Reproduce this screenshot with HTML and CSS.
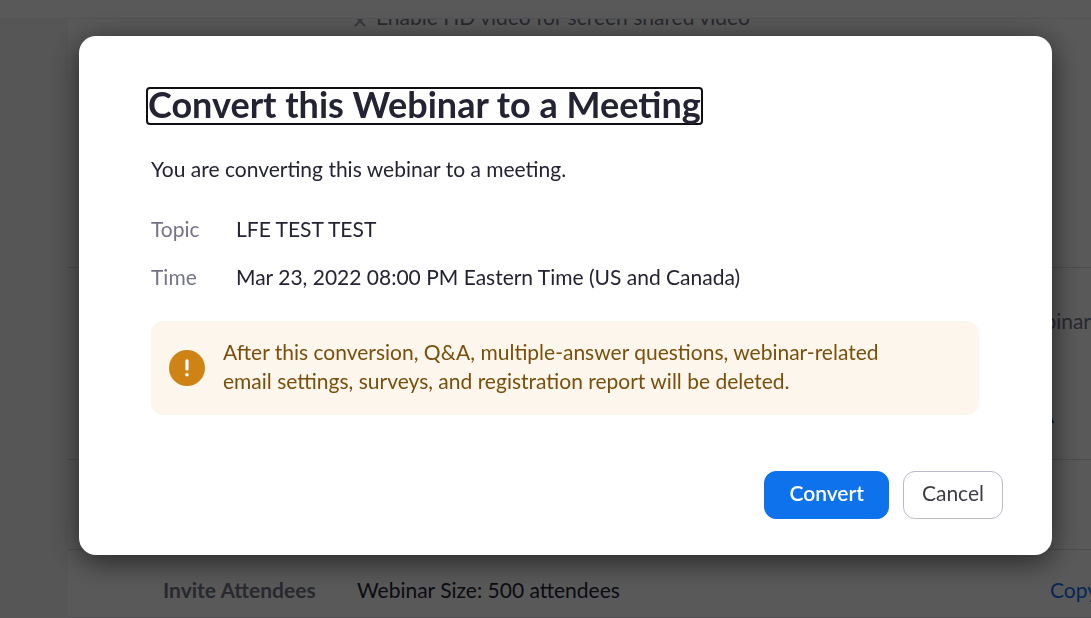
FILE: index.html
```html
<!DOCTYPE html>
<html lang="en">
<head>
<meta charset="utf-8">
<meta name="viewport" content="width=device-width, initial-scale=1">
<title>Convert this Webinar to a Meeting</title>
<link rel="stylesheet" href="styles.css">
</head>
<body>
<div class="page">
  <header class="topbar"></header>
  <div class="layout">
    <aside class="sidebar"></aside>
    <main class="content">
      <section class="row row-options">
        <p class="option">
          <svg class="option-icon" viewBox="0 0 12 12" aria-hidden="true"><path d="M1 1l10 10M11 1L1 11"/></svg>
          Enable HD video for screen shared video
        </p>
      </section>
      <section class="row row-details">
        <p class="muted">Webinar</p>
        <p class="detail">Q&amp;A</p>
      </section>
      <section class="row row-empty"></section>
      <section class="row row-invite">
        <h2 class="row-label">Invite Attendees</h2>
        <p class="row-value">Webinar Size: 500 attendees</p>
        <a class="row-link" href="#">Copy Invitation</a>
      </section>
    </main>
  </div>
</div>
<div class="overlay">
  <div class="dialog" role="dialog" aria-modal="true" aria-labelledby="dialog-title">
    <h1 class="title" id="dialog-title" tabindex="-1">Convert this Webinar to a Meeting</h1>
    <div class="body">
      <p class="intro">You are converting this webinar to a meeting.</p>
      <dl class="facts">
        <div class="fact"><dt>Topic</dt><dd>LFE TEST TEST</dd></div>
        <div class="fact"><dt>Time</dt><dd>Mar 23, 2022 08:00 PM Eastern Time (US and Canada)</dd></div>
      </dl>
      <div class="notice" role="alert">
        <svg class="notice-icon" viewBox="0 0 36 36" aria-hidden="true">
          <circle cx="18" cy="18" r="18" fill="#cf8314"/>
          <path d="M18 10.8v8.2" stroke="#fff" stroke-width="3.2" stroke-linecap="round"/>
          <circle cx="18" cy="24.8" r="1.8" fill="#fff"/>
        </svg>
        <p class="notice-text">After this conversion, Q&amp;A, multiple-answer questions, webinar-related email settings, surveys, and registration report will be deleted.</p>
      </div>
    </div>
    <div class="actions">
      <button class="button button-primary" type="button">Convert</button>
      <button class="button" type="button">Cancel</button>
    </div>
  </div>
</div>
</body>
</html>
```
FILE: styles.css
```css
* { box-sizing: border-box; }

body, h1, h2, p, dl, dd { margin: 0; }

body {
  font-family: Lato, "Liberation Sans", sans-serif;
  font-size: 21px;
  line-height: 28px;
  color: #232333;
  background: #fff;
}

.page {
  display: flex;
  flex-direction: column;
  height: 100vh;
  overflow: hidden;
}

.topbar {
  flex: none;
  height: 19px;
  border-bottom: 1px solid #ededf2;
}

.layout {
  display: flex;
  flex: 1;
  min-height: 0;
  overflow: hidden;
}

.sidebar {
  flex: none;
  width: 68px;
  background: #f7f7fa;
}

.content { flex: 1; min-width: 0; }

.row { border-bottom: 1px solid #dcdce5; }

.row-options {
  display: flow-root;
  height: 249px;
}

.option {
  display: flex;
  align-items: center;
  gap: 10px;
  margin-top: -16px;
  padding-left: 286px;
  color: #747487;
}

.option-icon {
  width: 12px;
  height: 12px;
  margin-top: 8px;
  fill: none;
  stroke: #a0a0ac;
  stroke-width: 2;
}

.row-details {
  display: flex;
  flex-direction: column;
  align-items: flex-end;
  gap: 66px;
  height: 192px;
  padding-top: 39px;
}

.muted { color: #747487; }

.detail { padding-right: 37px; }

.row-empty { height: 90px; }

.row-invite {
  display: grid;
  grid-template-columns: 194px 1fr 41px;
  padding: 26px 0 13px 95px;
  white-space: nowrap;
}

.row-label {
  font-size: 21px;
  font-weight: 700;
  color: #747487;
}

.row-link {
  color: #0e72ed;
  text-decoration: none;
}

.overlay {
  position: fixed;
  inset: 0;
  padding: 36px 39px 63px 79px;
  background: rgba(0, 0, 0, 0.65);
}

.dialog {
  padding: 51px 49px 36px 67px;
  border-radius: 17px;
  background: #fff;
  box-shadow: 0 6px 30px rgba(0, 0, 0, 0.6);
}

.title {
  width: fit-content;
  padding-bottom: 4px;
  border: 2px solid #101014;
  border-radius: 4px;
  font-size: 36px;
  font-weight: 700;
  line-height: 30px;
}

.body { padding: 30px 24px 0 5px; }

.facts {
  display: grid;
  gap: 20px;
  margin: 32px 0 30px;
}

.fact {
  display: grid;
  grid-template-columns: 85px 1fr;
}

dt { color: #747487; }

.notice {
  display: flex;
  align-items: center;
  gap: 18px;
  padding: 0 18px;
  border-radius: 12px;
  background: #fdf6ec;
}

.notice-icon {
  flex: none;
  width: 36px;
  height: 36px;
}

.notice-text {
  max-width: 680px;
  padding: 16px 0 20px;
  line-height: 29px;
  color: #7a4f0c;
}

.actions {
  display: flex;
  justify-content: flex-end;
  gap: 14px;
  margin-top: 56px;
}

.button {
  height: 48px;
  padding: 0 18px 4px;
  border: 1px solid #babacc;
  border-radius: 12px;
  background: #fff;
  font: inherit;
  color: #3c3c44;
}

.button-primary {
  padding: 0 24px 4px;
  border-color: #0e72ed;
  background: #0e72ed;
  font-weight: 600;
  color: #fff;
}
```
